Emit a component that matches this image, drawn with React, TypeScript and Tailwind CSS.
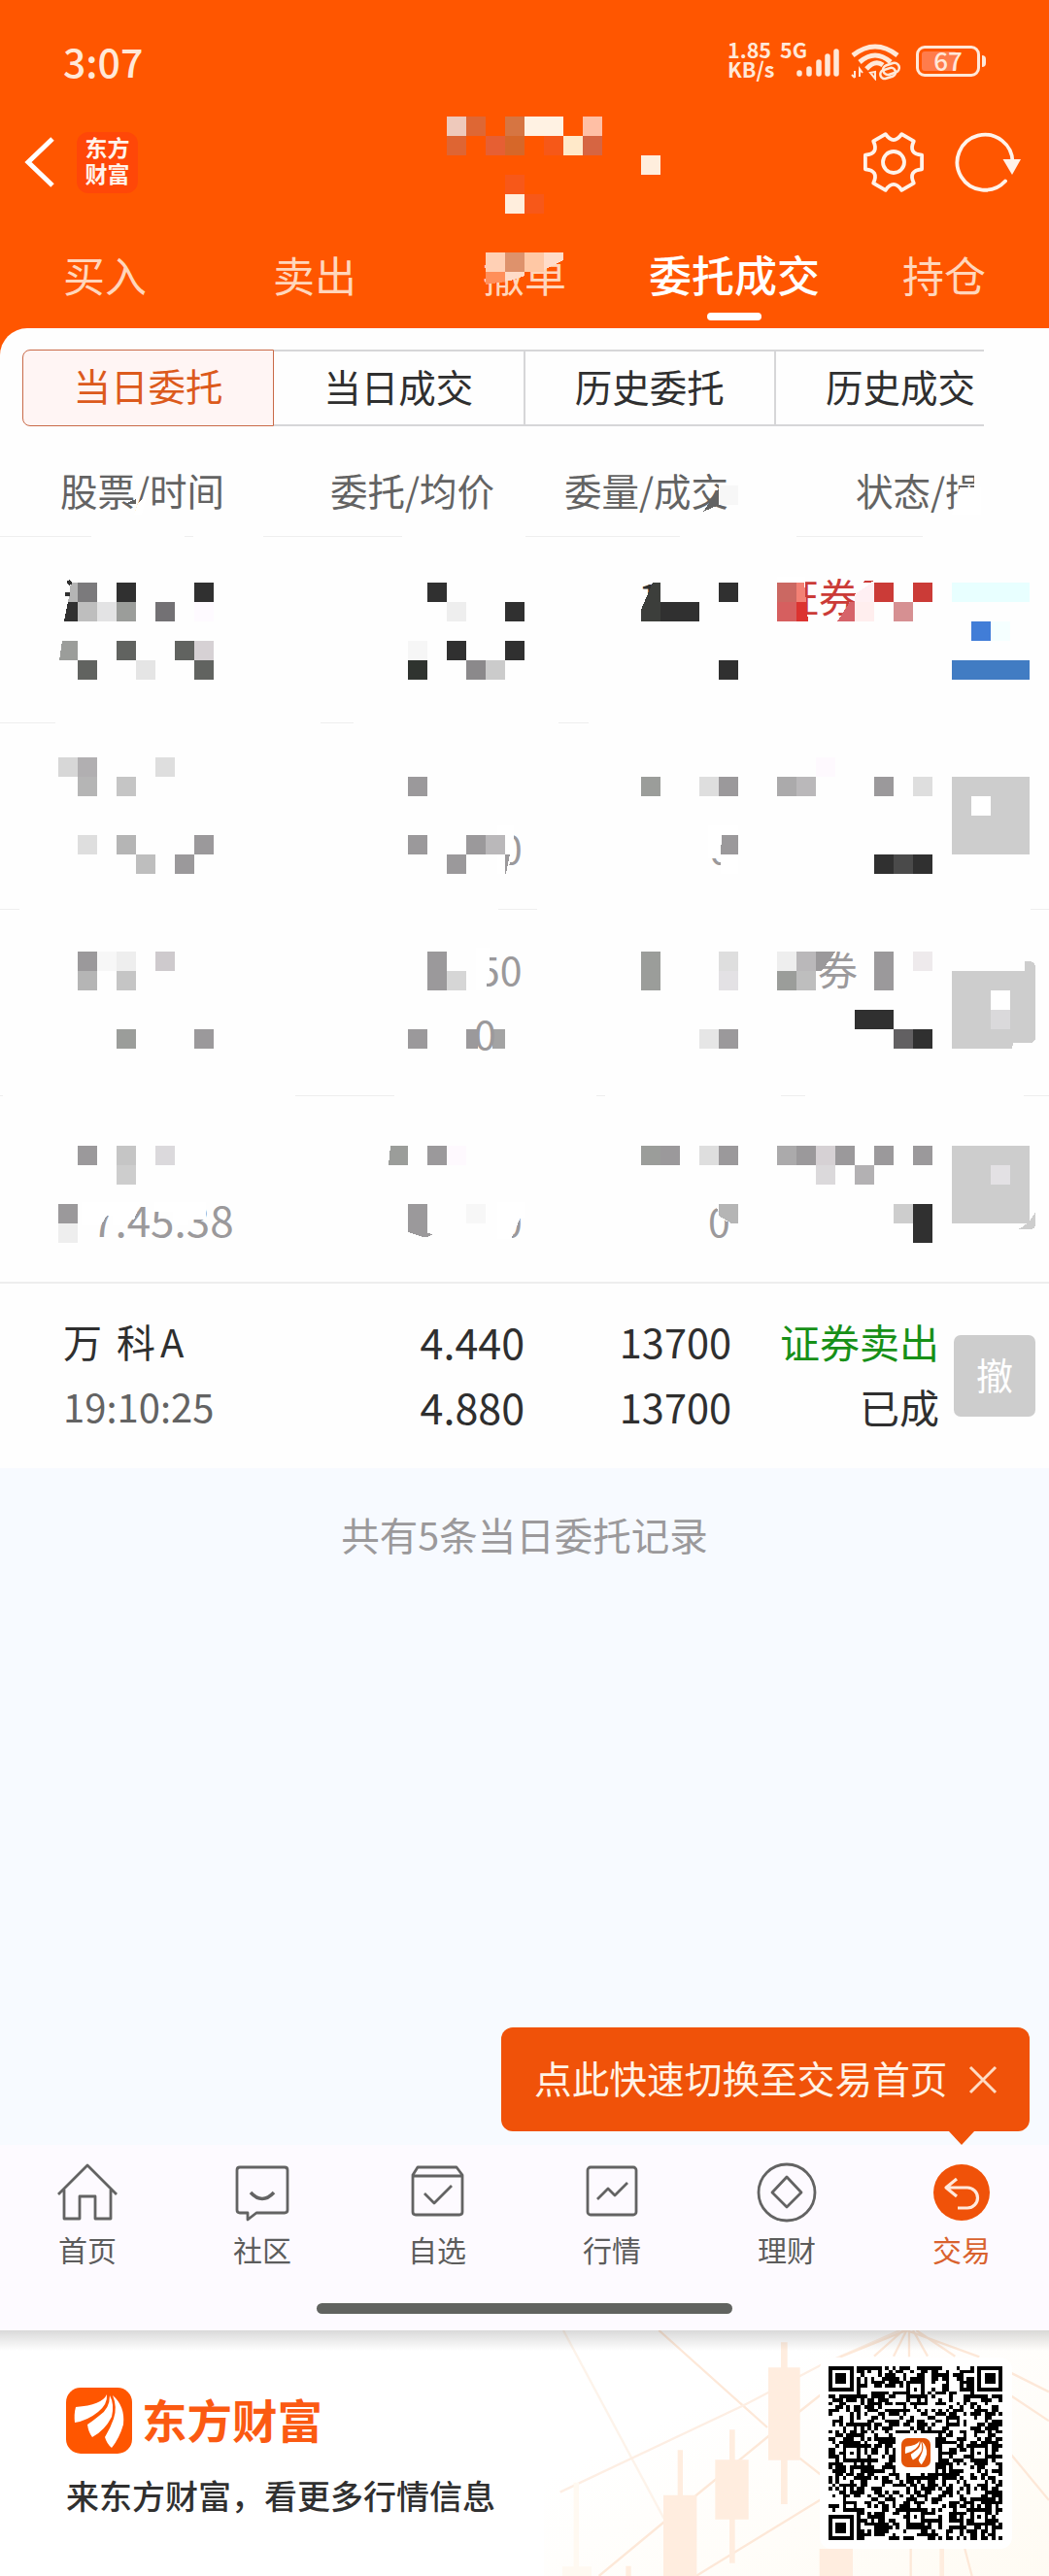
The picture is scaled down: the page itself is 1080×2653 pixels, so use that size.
import { ReactNode } from 'react'

type Cell = [x: number, y: number, fill: string, w?: number, h?: number]

const CELL = 20
const ROW_HEIGHT = 192

const TABS = ['买入', '卖出', '撤单', '委托成交', '持仓']
const SEGMENTS = ['当日委托', '当日成交', '历史委托']

const HEADER_CELLS: Cell[] = [
  [460, 120, '#eec9bb'], [480, 120, '#de6734'], [520, 120, '#d67542'], [540, 120, '#fff2e3', 40], [600, 120, '#ffbfa5'],
  [460, 140, '#de6533'], [500, 140, '#e65f33'], [520, 140, '#d66729'], [560, 140, '#f65818'], [580, 140, '#ffe9c9'],
  [600, 140, '#d66542'], [660, 160, '#ffeedd'], [520, 180, '#f75819'], [520, 200, '#ffeedd'], [540, 200, '#f75819'],
  [500, 260, '#ffd0b5'], [520, 260, '#de926c'], [540, 260, '#ffc8a5'],
]

const ROW1_CELLS: Cell[] = [
  [80, 600, '#7b7a7c'], [120, 600, '#303030'], [200, 600, '#303030'],
  [80, 620, '#bebebe'], [100, 620, '#e3e3e4'], [120, 620, '#9b9d9a'], [160, 620, '#737174'], [200, 620, '#fefaff'],
  [120, 660, '#616360'], [180, 660, '#616360'], [200, 660, '#d6d1d4'],
  [80, 680, '#616360'], [140, 680, '#e5e5e5'], [200, 680, '#616360'],
  [440, 600, '#303030'], [460, 620, '#eeeeee'], [520, 620, '#303030'],
  [420, 660, '#f6f6f6'], [460, 660, '#303030'], [520, 660, '#303030'],
  [420, 680, '#2f332f'], [480, 680, '#8b898b'], [500, 680, '#cbcbcb'],
  [740, 600, '#303030'], [680, 620, '#303030', 40], [740, 680, '#303030'],
  [900, 600, '#cb3b37'], [940, 600, '#cb3b37'], [920, 620, '#d69092'],
  [980, 600, '#e8ffff', 80], [1000, 640, '#417dd7'], [1020, 640, '#f5ffff'], [980, 680, '#417cc3', 80],
]

const ROW2_CELLS: Cell[] = [
  [60, 780, '#d7d7d7'], [80, 780, '#b1afb1'], [160, 780, '#dedede'], [80, 800, '#b5b5b5'], [120, 800, '#c5c5c5'],
  [80, 860, '#dedede'], [120, 860, '#b5b5b5'], [200, 860, '#9b999b'], [140, 880, '#bebebe'], [180, 880, '#9b999b'],
  [420, 800, '#9b999b'], [420, 860, '#9b999b'], [480, 860, '#9b999b'], [500, 860, '#bab8ba'], [460, 880, '#9b999b'],
  [660, 800, '#9b9d9a'], [720, 800, '#dedede'], [740, 800, '#9b999b'], [840, 780, '#fef9fe'],
  [800, 800, '#abaaab'], [820, 800, '#bab8ba'], [900, 800, '#9b999b'], [940, 800, '#dedede'],
  [900, 880, '#303030'], [920, 880, '#4a4a4a'], [940, 880, '#303030'],
  [980, 800, '#cdcdcd', 80, 80], [1000, 820, '#ffffff'],
]

const ROW3_CELLS: Cell[] = [
  [80, 980, '#9b999b'], [100, 980, '#f7f7f7'], [120, 980, '#eeeeee'], [160, 980, '#cecacd'],
  [80, 1000, '#b5b5b5'], [120, 1000, '#c5c5c5'], [120, 1060, '#9b9d9a'], [200, 1060, '#9b999b'],
  [440, 980, '#9b999b', 20, 40], [460, 1000, '#d6d6d6'], [420, 1060, '#9b999b'], [480, 1060, '#9b999b', 12], [507, 1060, '#a3a3a3', 13],
  [660, 980, '#9b9d9a', 20, 40], [740, 980, '#dedede'], [740, 1000, '#e3e1e4'], [720, 1060, '#e6e6e6'], [740, 1060, '#9b999b'],
  [800, 980, '#eeeeee'], [820, 980, '#bab8ba'], [800, 1000, '#9b9d9a'], [820, 1000, '#bebebe'],
  [900, 980, '#9b999b', 20, 40], [940, 980, '#eeeaec'],
  [880, 1040, '#303030', 40], [920, 1060, '#626062'], [940, 1060, '#303030'],
]

const ROW4_CELLS: Cell[] = [
  [80, 1180, '#9b999b'], [120, 1180, '#c5c5c5'], [160, 1180, '#dbd9dc'], [120, 1200, '#cdcdcd'],
  [60, 1240, '#9b999b'], [60, 1260, '#eeeeee'],
  [440, 1180, '#9b999b'], [460, 1180, '#fef9fe'], [480, 1240, '#f7f7f7'],
  [660, 1180, '#9b9d9a'], [680, 1180, '#9b999b'], [720, 1180, '#dedede'], [740, 1180, '#9b999b'],
  [800, 1180, '#abaaab'], [820, 1180, '#9b999b'], [840, 1180, '#d6d1d4'], [860, 1180, '#9b999b'], [900, 1180, '#9b999b'],
  [940, 1180, '#9b999b'], [840, 1200, '#dbd9db'], [880, 1200, '#b3b1b3'],
  [920, 1240, '#cdcdcd'], [940, 1240, '#303030', 20, 40],
  [980, 1180, '#cdcdcd', 80, 80], [1020, 1200, '#e3e1e4'],
]

const Mosaic = ({ top, height, cells, children }: { top: number; height: number; cells: Cell[]; children?: ReactNode }) => (
  <svg
    className="absolute inset-0 w-full h-full"
    viewBox={`0 ${top} 1080 ${height}`}
    shapeRendering="crispEdges"
    fontSize={41}
  >
    {cells.map(([x, y, fill, w = CELL, h = CELL]) => (
      <rect key={`${x}-${y}`} x={x} y={y} width={w} height={h} fill={fill} />
    ))}
    {children}
  </svg>
)

// order row whose content is hidden, lines = visible pieces of the top border
const HiddenRow = ({ top, cells, lines, children }: { top: number; cells: Cell[]; lines: number[][]; children?: ReactNode }) => (
  <div className="relative h-[192px]">
    <Mosaic top={top} height={ROW_HEIGHT} cells={cells}>
      {lines.map(([from, to]) => (
        <rect key={from} x={from} y={top} width={to - from} height={1} fill="#eeeeee" />
      ))}
      {children}
    </Mosaic>
  </div>
)

const StatusBar = () => (
  <div className="flex items-start h-[128px] pt-[44px] pl-[65px] pr-[71px] text-[#ffe8d8]">
    <div className="text-[41px] leading-[36px] font-medium">3:07</div>
    <div className="ml-auto flex">
      <div className="w-[51px] text-[21.500px] leading-[20px] font-bold whitespace-nowrap -mt-[3px]">
        <div>1.85</div>
        <div>KB/s</div>
      </div>
      <div className="text-[21.500px] leading-[20px] font-bold w-[28px] -mt-[3px] ml-[3px]">5G</div>
      <svg className="w-[48px] h-[36px] -ml-[12px] mt-[1px]" viewBox="0 0 48 36" fill="none" stroke="currentColor" strokeWidth="5.5" strokeLinecap="round">
        <path d="M4 31v-1M14 31v-5M24 31v-12M33 31v-18M42 31V8" />
      </svg>
      <svg className="w-[52px] h-[38px] ml-[9px] mt-[1px]" viewBox="0 0 52 38" fill="none" stroke="currentColor">
        <path d="M2 12Q25-6 48 12" strokeWidth="5" />
        <path d="M9 19Q25 5 41 19" strokeWidth="5" />
        <path d="M16 26Q25 16 33 22" strokeWidth="5" />
        <path d="M4 28v7M1 32l3 3M9 34v-8l3 4M25 29v7l-5-6Z" strokeWidth="2" />
        <rect x="33" y="21" width="17" height="10" rx="5" strokeWidth="2.6" transform="rotate(-18 41 26)" />
        <rect x="30" y="26" width="16" height="9" rx="4.5" strokeWidth="2.6" transform="rotate(-18 38 30)" />
      </svg>
      <div className="relative ml-[15px] mt-[3px] w-[66px] h-[32px] rounded-[9px] border-[3px] border-current p-[3px]">
        <div className="w-[36px] h-full rounded-[3px] bg-[#ff7c4b]" />
        <div className="absolute inset-0 text-center text-[26px] leading-[24px] font-medium">67</div>
        <div className="absolute -right-[9px] top-[7px] w-[4px] h-[12px] rounded-r bg-current" />
      </div>
    </div>
  </div>
)

const polar = (r: number, deg: number) => {
  const a = (deg * Math.PI) / 180
  return `${(r * Math.cos(a)).toFixed(1)} ${(r * Math.sin(a)).toFixed(1)}`
}

const GEAR_PATH =
  [0, 60, 120, 180, 240, 300]
    .map((a) => `${a === 0 ? 'M' : 'L'}${polar(30, a - 14)}L${polar(30, a + 14)}Q${polar(17, a + 30)} ${polar(30, a + 46)}`)
    .join('') + 'Z'

const TitleBar = () => (
  <div className="flex items-center h-[78px] pl-[24px] pr-[28px] text-[#fff3ea]">
    <svg className="w-[34px] h-[54px]" viewBox="0 0 34 54" fill="none" stroke="#fff" strokeWidth="5">
      <path d="M30 3L5 27L30 51" />
    </svg>
    <div className="ml-[21px] w-[63px] h-[63px] rounded-[12px] bg-[#ff4708] pt-[2px] text-center text-[23px] leading-[27px] font-bold">
      东方
      <br />
      财富
    </div>
    <svg className="ml-auto w-[66px] h-[66px]" viewBox="-33 -33 66 66" fill="none" stroke="currentColor" strokeWidth="3.8" strokeLinejoin="round">
      <path d={GEAR_PATH} />
      <circle r="11" />
    </svg>
    <svg className="ml-[29px] w-[70px] h-[66px]" viewBox="-33 -33 70 66" fill="none" stroke="currentColor" strokeWidth="3.8">
      <path d="M27.500 1A28.500 28.500 0 1 0 20 19.500" strokeLinecap="round" />
      <path d="M17.500-3H36L27 13Z" fill="currentColor" stroke="none" />
    </svg>
  </div>
)

const Header = () => (
  <header className="relative h-[338px] bg-[#ff5600]">
    <StatusBar />
    <TitleBar />
    <nav className="grid grid-cols-5 pt-[46px]">
      {TABS.map((tab) => (
        <div key={tab} className="flex flex-col items-center whitespace-nowrap">
          <span
            className={
              tab === '委托成交'
                ? 'text-[44px] leading-[60px] font-medium text-white'
                : 'text-[43px] leading-[60px] text-[#ffd6bc]'
            }
          >
            {tab}
          </span>
          {tab === '委托成交' && <span className="mt-[10px] w-[56px] h-[8px] rounded-[4px] bg-white" />}
        </div>
      ))}
    </nav>
    <Mosaic top={0} height={338} cells={HEADER_CELLS}>
      <rect x={490} y={256} width={90} height={4} fill="#ff5600" />
      <path d="M560 260H580V268L560 278Z" fill="#ffdcc9" />
      <path d="M500 280H520V290L500 293Z" fill="#ff8f5a" />
      <path d="M520 280H540V284L526 289H520Z" fill="#ffdcc8" />
    </Mosaic>
  </header>
)

const Segments = () => (
  <div className="flex pl-[23px] pt-[22px] text-[38.500px] leading-[71px] text-[#2f2f2f] text-center">
    {SEGMENTS.map((item, index) => (
      <div
        key={item}
        className={
          index === 0
            ? 'w-[259px] h-[79px] rounded-l-[8px] border-[1.500px] border-[#c96a48] bg-[#fff5f4] text-[#dc5a1c]'
            : 'w-[258.500px] h-[79px] border-y-2 border-r-2 border-[#d6d6d8]'
        }
      >
        {item}
      </div>
    ))}
    <div className="w-[214px] h-[79px] border-y-2 border-[#d6d6d8] pl-[51px] text-left whitespace-nowrap">历史成交</div>
  </div>
)

const TableHead = () => (
  <div className="relative flex h-[113px] pl-[62px] pt-[37px] text-[38.500px] leading-[56px] text-[#636363] whitespace-nowrap">
    <div className="w-[278px]">股票/时间</div>
    <div className="w-[241px]">委托/均价</div>
    <div className="w-[300px]">委量/成交</div>
    <div className="w-[122px] overflow-hidden">状态/操作</div>
    <Mosaic top={439} height={113} cells={[]}>
      <path d="M724 527L740 503V520Z" fill="#636363" />
      <path d="M740 500H760V520H740Z" fill="#f7f7f7" />
      <path d="M980 530L988 502H1010V530Z" fill="#fff" />
      <path d="M128 519L140 514V519Z" fill="#636363" />
      <path d="M142 519L152 507L146 530H138Z" fill="#fff" />
    </Mosaic>
  </div>
)

const OrderRow = () => (
  <div className="relative flex h-[192px] pl-[65px] pt-[26px] border-t-2 border-[#eeeeee] text-[41px] leading-[67px] text-[#2f2f2f] whitespace-nowrap">
    <div className="w-[235px]">
      <div className="text-[40px] [word-spacing:6px]">
        万 科<span className="ml-[5px]">A</span>
      </div>
      <div className="text-[40px] text-[#636363]">19:10:25</div>
    </div>
    <div className="w-[240px] text-right text-[43px]">
      <div>4.440</div>
      <div>4.880</div>
    </div>
    <div className="w-[213px] text-right text-[41.500px]">
      <div>13700</div>
      <div>13700</div>
    </div>
    <div className="w-[214px] text-right">
      <div className="text-[#179017]">证券卖出</div>
      <div>已成</div>
    </div>
    <button className="ml-[15px] mt-[27px] w-[84px] h-[84px] rounded-[7px] bg-[#cdcdcd] text-white text-[38px] leading-[80px] pb-1">
      撤
    </button>
  </div>
)

const Orders = () => (
  <section>
    <HiddenRow top={552} cells={ROW1_CELLS} lines={[[0, 94], [190, 199], [271, 414], [541, 700], [820, 950]]}>
      <path d="M73 600H80V620H70Z" fill="#b5b5b5" />
      <path d="M70 620H80V640H66Z" fill="#303030" />
      <path d="M64 660H80V680H61Z" fill="#9b9d9a" />
      <path d="M70 598l3 4M67 612h5" stroke="#303030" strokeWidth="4" />
      <text x={657} y={631} fill="#303030">1</text>
      <path d="M672 600H680V640H660V628Z" fill="#3c3e3b" />
      <text x={802} y={631} fill="#cb3b37">证券</text>
      <path d="M800 594H829V640H800Z" fill="#fff" />
      <path d="M800 600H820V620H800Z" fill="#cb6862" />
      <path d="M800 620H820V640H800Z" fill="#d65f5f" />
      <path d="M820 600H828L830 620H820Z" fill="#f38175" />
      <path d="M820 620H830L832 640H820Z" fill="#dc3330" />
      <path d="M880 612L898 600H900V620H880Z" fill="#fff0f3" />
      <path d="M880 620H900V640H880Z" fill="#ffeeee" />
      <path d="M862 640L875 620H880V640Z" fill="#d6646a" />
      <path d="M888 600L890 598H900L896 600Z" fill="#cb3b37" />
    </HiddenRow>
    <HiddenRow top={744} cells={ROW2_CELLS} lines={[[0, 57], [330, 364], [575, 606]]}>
      <text x={515} y={890} fill="#9b999b">0</text>
      <path d="M512 850H529V880L520 900H512Z" fill="#fff" />
      <path d="M512 860H520V880H512Z" fill="#bab8ba" />
      <path d="M520 880H525L521 900H520Z" fill="#9b999b" />
      <text x={730} y={890} fill="#9b999b">0</text>
      <path d="M729 850H760V900H742V884H729Z" fill="#fff" />
      <path d="M743 860H760V880H742Z" fill="#9b999b" />
    </HiddenRow>
    <HiddenRow top={936} cells={ROW3_CELLS} lines={[[0, 20], [513, 553], [1061, 1080]]}>
      <text x={492} y={1015} fill="#9b999b">50</text>
      <path d="M490 976H504V998L500 1020H490Z" fill="#fff" />
      <text x={488} y={1081} fill="#9b999b">0</text>
      <path d="M840 980H860L846 1000H840Z" fill="#9b999b" />
      <text x={842} y={1015} fill="#9b999b">券</text>
      <path d="M980 1000H1055V990H1060Q1066 991 1066 996V1068Q1066 1074 1060 1074H1043L1042 1080H980Z" fill="#cdcdcd" />
      <rect x={1020} y={1020} width={20} height={20} fill="#fff" />
      <rect x={1020} y={1040} width={20} height={20} fill="#dad9db" />
    </HiddenRow>
    <HiddenRow top={1128} cells={ROW4_CELLS} lines={[[0, 3], [304, 406], [614, 623], [804, 829], [1054, 1080]]}>
      <text x={94} y={1274} fill="#9b999b" fontSize={44}>7:45:38</text>
      <path d="M84 1238H145L138 1256H128V1262H116V1252H110L104 1262H84Z" fill="#fff" />
      <path d="M159 1238H212V1256H194V1262H178V1248H159Z" fill="#fff" />
      <path d="M402 1180H420V1200H400Z" fill="#9b9d9a" />
      <path d="M420 1240H440V1270L446 1271Q439 1276 432 1273L420 1269Z" fill="#9b999b" />
      <text x={515} y={1274} fill="#9b999b">0</text>
      <path d="M512 1238H540V1254L536 1254L526 1276H512Z" fill="#fff" />
      <text x={729} y={1274} fill="#9b999b">0</text>
      <path d="M735 1238H760V1258H748L740 1252V1248Z" fill="#fff" />
      <path d="M740 1240H760V1260H753L740 1252Z" fill="#b5b5b5" />
      <path d="M1048 1266Q1060 1261 1066 1248V1262Q1065 1266 1060 1266Z" fill="#cdcdcd" />
    </HiddenRow>
    <OrderRow />
  </section>
)

const NAV_ITEMS: { label: string; icon: ReactNode }[] = [
  { label: '首页', icon: <path d="M2 33L32 3L62 33M8 28V58H24V35H40V58H56V28" /> },
  {
    label: '社区',
    icon: (
      <>
        <path d="M9 5H55Q58 5 58 8V49Q58 52 55 52H26L17 59V52H9Q6 52 6 49V8Q6 5 9 5Z" />
        <path d="M20 31Q32 44 44 31" strokeWidth="3.5" />
      </>
    ),
  },
  {
    label: '自选',
    icon: (
      <>
        <path d="M12 5H52L58 13V51Q58 54 55 54H10Q7 54 7 51V13ZM7 14H58" />
        <path d="M19 32L29 42L47 24" />
      </>
    ),
  },
  {
    label: '行情',
    icon: (
      <>
        <rect x="7" y="5" width="50" height="49" rx="3" />
        <path d="M17 38L28 27L35 34L48 21" />
      </>
    ),
  },
  {
    label: '理财',
    icon: (
      <>
        <circle cx="32" cy="31" r="29" />
        <path d="M32 15L47 31L32 46L17 31Z" />
      </>
    ),
  },
  {
    label: '交易',
    icon: (
      <>
        <circle cx="32" cy="31" r="29" fill="#f05209" stroke="none" />
        <path d="M27 17L16 26L27 35M16 26H38A10 10 0 0 1 38 47H28" stroke="#ffe9dc" strokeWidth="3.200" />
      </>
    ),
  },
]

const BottomNav = () => (
  <nav className="relative h-[191px] bg-[#fdfaff] pt-[18px]">
    <div className="absolute right-[20px] -top-[121px] w-[544px] h-[107px] rounded-[12px] bg-[#f05209] flex items-center pl-[34px] text-[38.700px] text-[#fff3e6] whitespace-nowrap">
      <span className="-mt-[4px]">点此快速切换至交易首页</span>
      <svg className="ml-[20px] w-[32px] h-[32px]" viewBox="0 0 32 32" stroke="#ffdcc4" strokeWidth="3">
        <path d="M3 3L29 29M29 3L3 29" />
      </svg>
      <svg className="absolute right-[56px] top-[106px] w-[28px] h-[15px]" viewBox="0 0 28 15" fill="#f05209">
        <path d="M0 0H28L14 15Z" />
      </svg>
    </div>
    <div className="grid grid-cols-6">
      {NAV_ITEMS.map(({ label, icon }) => (
        <div key={label} className="flex flex-col items-center">
          <svg className="w-[64px] h-[64px]" viewBox="0 0 64 64" fill="none" stroke="#636363" strokeWidth="2.800" strokeLinejoin="round">
            {icon}
          </svg>
          <span
            className={
              label === '交易'
                ? 'mt-[3px] text-[30px] leading-[44px] text-[#d9622e]'
                : 'mt-[3px] text-[30px] leading-[44px] text-[#5c5c5c]'
            }
          >
            {label}
          </span>
        </div>
      ))}
    </div>
    <div className="mx-auto mt-[34px] w-[428px] h-[11px] rounded-full bg-[#616360]" />
  </nav>
)

const LogoMark = ({ className, fill }: { className: string; fill: string }) => (
  <svg className={className} viewBox="0 0 68 68">
    <rect width="68" height="68" rx="15" fill={fill} />
    <g fill="#fff">
      <path d="M42 7Q37 18 10 20Q8 27 9 36Q22 34 33 25Q43 17 42 7Z" />
      <path d="M45 8Q45 22 34 29Q28 34 22 38Q23 46 27 51Q40 44 47 30Q50 17 45 8Z" />
      <path d="M48 8Q53 20 49 32Q46 41 40 51Q42 58 47 62Q55 52 59 38Q61 19 48 8Z" />
    </g>
  </svg>
)

const QR_SIZE = 49
const QR_ALIGN = [6, 24, 42]

const ring = (dx: number, dy: number) => Math.max(Math.abs(dx), Math.abs(dy))

const buildQr = () => {
  let seed = 20417
  let path = ''
  for (let y = 0; y < QR_SIZE; y++) {
    for (let x = 0; x < QR_SIZE; x++) {
      seed = (seed * 48271) % 2147483647
      let dark = (seed >> 8) % 100 < 52
      for (const ax of QR_ALIGN) {
        for (const ay of QR_ALIGN) {
          const d = ring(x - ax, y - ay)
          if (d <= 2) dark = d !== 1
        }
      }
      for (const [fx, fy] of [[3, 3], [45, 3], [3, 45]]) {
        const d = ring(x - fx, y - fy)
        if (d <= 4) dark = d === 3 || d <= 1
      }
      if (ring(x - 24, y - 24) <= 5) dark = false
      if (dark) path += `M${x} ${y}h1v1h-1z`
    }
  }
  return path
}

const QR_PATH = buildQr()

const Candles = () => (
  <svg className="absolute right-0 top-0 w-[520px] h-[253px]" viewBox="0 60 1560 759">
    <defs>
      <linearGradient id="glow" x1="0" y1="0" x2="1" y2="1">
        <stop offset="0.300" stopColor="#fff" />
        <stop offset="1" stopColor="#fffbf3" />
      </linearGradient>
    </defs>
    <rect y="60" width="1560" height="759" fill="url(#glow)" />
    <g stroke="#fde8d8" strokeWidth="7" fill="none">
      <path d="M60 60L370 640" stroke="#fdf3ea" />
      <path d="M355 60L690 360M790 455L860 510" />
      <path d="M50 560L620 290L860 165L1100 60" stroke="#fdeee3" />
      <path d="M170 819L470 570L690 390L860 255" />
      <path d="M470 819L860 580M1120 60L915 142M1120 60L1345 142M1110 60L1020 140M1120 60L1080 140M1128 60V142M1140 60L1185 140M1150 60L1270 140" />
      <path d="M1440 190L1560 250M1440 260L1560 340M1440 440L1560 585M1133 735V819M1300 735L1322 819" />
    </g>
    <g fill="#ffeddf">
      <path d="M732 97h20v500h-20zM693 175h98v286h-98z" />
      <path d="M573 367h17v412h-17zM529 460h103v184h-103z" />
      <path d="M413 430h16v150h-16zM369 569h103v250h-103z" />
      <path d="M851 735h103v84h-103zM1222 735h14v84h-14zM253 788h16v31h-16z" />
    </g>
    <path d="M92 530h16v262h-16zM57 790h90v29h-90z" fill="#fff9f1" />
  </svg>
)

const Banner = () => (
  <footer className="relative flex h-[253px] bg-white">
    <Candles />
    <div className="relative pl-[68px] pt-[59px]">
      <div className="flex items-center">
        <LogoMark className="w-[68px] h-[68px]" fill="#ff5600" />
        <span className="ml-[10px] -mt-[5px] text-[46.500px] leading-[68px] font-bold text-[#fb5a12]">东方财富</span>
      </div>
      <div className="mt-[18px] text-[34px] leading-[50px] font-medium text-[#303030]">来东方财富，看更多行情信息</div>
    </div>
    <div className="relative ml-auto mr-[38px] mt-[28px] w-[198px] h-[197px] rounded-[12px] bg-white p-[9px]">
      <svg className="w-[179px] h-[179px]" viewBox="0 0 49 49" shapeRendering="crispEdges">
        <path d={QR_PATH} />
      </svg>
      <LogoMark className="absolute left-[84px] top-[83px] w-[30px] h-[30px]" fill="#e35509" />
    </div>
    <div className="absolute inset-x-0 top-0 h-[21px] bg-linear-to-b from-black/15 to-transparent" />
  </footer>
)

export default function App() {
  return (
    <div className="w-[1080px] h-[2653px] overflow-hidden bg-white font-['Noto_Sans_CJK_SC',sans-serif]">
      <Header />
      <main className="h-[1871px] flex flex-col bg-[#ff5600]">
        <div className="bg-[#fefefe] rounded-tl-[28px]">
          <Segments />
          <TableHead />
          <Orders />
        </div>
        <div className="grow bg-[#f7faff] pt-[40px] text-center text-[39.500px] leading-[56px] text-[#9b999b]">
          共有5条当日委托记录
        </div>
      </main>
      <BottomNav />
      <Banner />
    </div>
  )
}
